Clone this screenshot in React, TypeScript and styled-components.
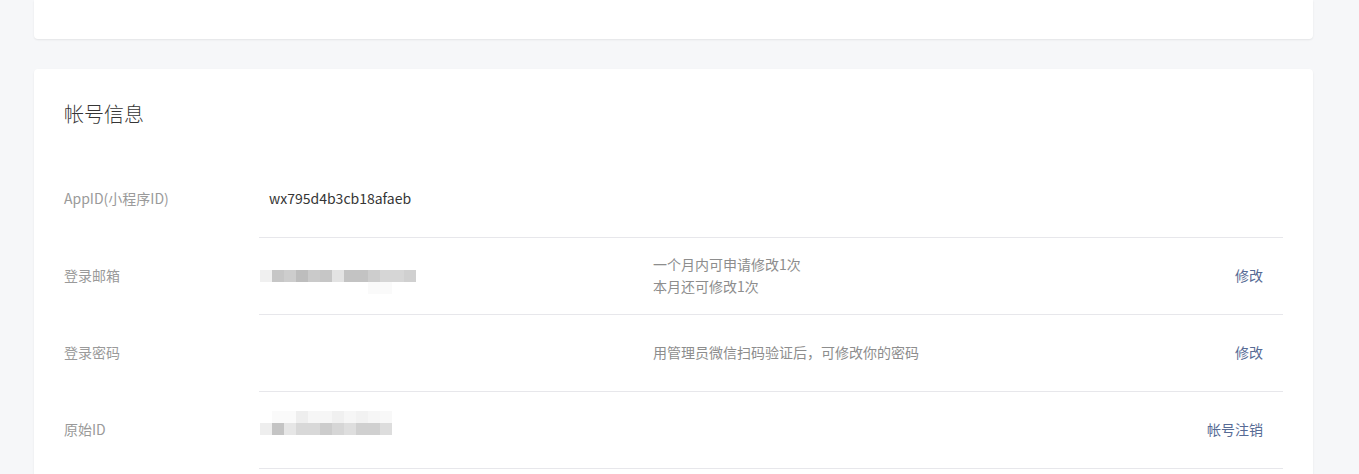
import * as React from "react";
import styled, { createGlobalStyle } from "styled-components";

const GlobalStyle = createGlobalStyle`
  html, body {
    margin: 0;
    padding: 0;
    background: #f6f7f9;
    font-family: "Noto Sans CJK SC", "Noto Sans", sans-serif;
    -webkit-font-smoothing: antialiased;
  }
`;

const Page = styled.div`
  padding: 0 46px 0 34px;
  display: flex;
  flex-direction: column;
  gap: 30px;
`;

const Card = styled.div<{ $top?: boolean }>`
  background: #ffffff;
  border-radius: ${(p) => (p.$top ? "0 0 4px 4px" : "4px")};
  box-shadow: 0 1px 2px rgba(0, 0, 0, 0.08);
  height: ${(p) => (p.$top ? "39px" : "auto")};
  padding: ${(p) => (p.$top ? "0" : "33px 30px 40px")};
`;

const Title = styled.h2`
  margin: 0 0 35px;
  font-size: 20px;
  line-height: 24px;
  font-weight: 300;
  color: #353535;
`;

const Row = styled.div`
  display: flex;
  height: 77px;
`;

const Label = styled.div`
  width: 195px;
  flex-shrink: 0;
  display: flex;
  align-items: center;
  padding-bottom: 3px;
  box-sizing: border-box;
  font-size: 14px;
  color: #9a9a9a;
`;

const Body = styled.div`
  flex: 1;
  display: flex;
  align-items: center;
  border-bottom: 1px solid #e7e7eb;
  padding: 0 20px 3px 0;
`;

const Value = styled.div<{ $indent?: boolean }>`
  width: 394px;
  flex-shrink: 0;
  padding-left: ${(p) => (p.$indent ? "10px" : "1px")};
  box-sizing: border-box;
  font-size: 14px;
  color: #353535;
`;

const Desc = styled.div`
  flex: 1;
  font-size: 14px;
  line-height: 22px;
  color: #8d8d8d;
`;

const Action = styled.a`
  font-size: 14px;
  color: #576b95;
  text-decoration: none;
  cursor: pointer;
`;

const Mosaic = styled.div<{ $down?: number; $up?: number }>`
  display: flex;
  flex-direction: column;
  margin-top: ${(p) => p.$down ?? 0}px;
  margin-bottom: ${(p) => p.$up ?? 0}px;
`;

const MosaicRow = styled.div<{ $offset?: number }>`
  display: flex;
  height: 12px;
  margin-left: ${(p) => p.$offset ?? 0}px;
`;

const Cell = styled.span<{ $c: string; $w?: number }>`
  display: block;
  width: ${(p) => p.$w ?? 12}px;
  height: 12px;
  background: ${(p) => p.$c};
`;

const emailTop = [
  "#f0f0f0", "#c6c6c6", "#cdcdcd", "#bdbdbd", "#cacaca", "#c6c6c6", "#e3e3e3",
  "#c3c3c3", "#c3c3c3", "#cdcdcd", "#d6d6d6", "#d6d6d6", "#d0d0d0",
];

const idTop = [
  "#ffffff", "#fafafa", "#fafafa", "#eeeeee", "#f6f6f6", "#f6f6f6", "#f0f0f0",
  "#f6f6f6", "#f2f2f2", "#f6f6f6", "#f8f8f8",
];
const idBottom = [
  "#eeeeee", "#c4c4c4", "#e6e6e6", "#d8d8d8", "#d8d8d8", "#cccccc", "#d6d6d6",
  "#dedede", "#d0d0d0", "#d0d0d0", "#dddddd",
];

const EmailMosaic = () => (
  <Mosaic $down={14}>
    <MosaicRow>
      {emailTop.map((c, i) => (
        <Cell key={i} $c={c} />
      ))}
    </MosaicRow>
    <MosaicRow $offset={108}>
      <Cell $c="#fafafa" $w={24} />
    </MosaicRow>
  </Mosaic>
);

const IdMosaic = () => (
  <Mosaic $up={11}>
    <MosaicRow>
      {idTop.map((c, i) => (
        <Cell key={i} $c={c} />
      ))}
    </MosaicRow>
    <MosaicRow>
      {idBottom.map((c, i) => (
        <Cell key={i} $c={c} />
      ))}
    </MosaicRow>
  </Mosaic>
);

export default function App() {
  return (
    <>
      <GlobalStyle />
      <Page>
        <Card $top />
        <Card>
          <Title>帐号信息</Title>
          <Row>
            <Label>AppID(小程序ID)</Label>
            <Body>
              <Value $indent>wx795d4b3cb18afaeb</Value>
            </Body>
          </Row>
          <Row>
            <Label>登录邮箱</Label>
            <Body>
              <Value>
                <EmailMosaic />
              </Value>
              <Desc>
                一个月内可申请修改1次
                <br />
                本月还可修改1次
              </Desc>
              <Action>修改</Action>
            </Body>
          </Row>
          <Row>
            <Label>登录密码</Label>
            <Body>
              <Value />
              <Desc>用管理员微信扫码验证后，可修改你的密码</Desc>
              <Action>修改</Action>
            </Body>
          </Row>
          <Row>
            <Label>原始ID</Label>
            <Body>
              <Value>
                <IdMosaic />
              </Value>
              <Desc />
              <Action>帐号注销</Action>
            </Body>
          </Row>
        </Card>
      </Page>
    </>
  );
}
